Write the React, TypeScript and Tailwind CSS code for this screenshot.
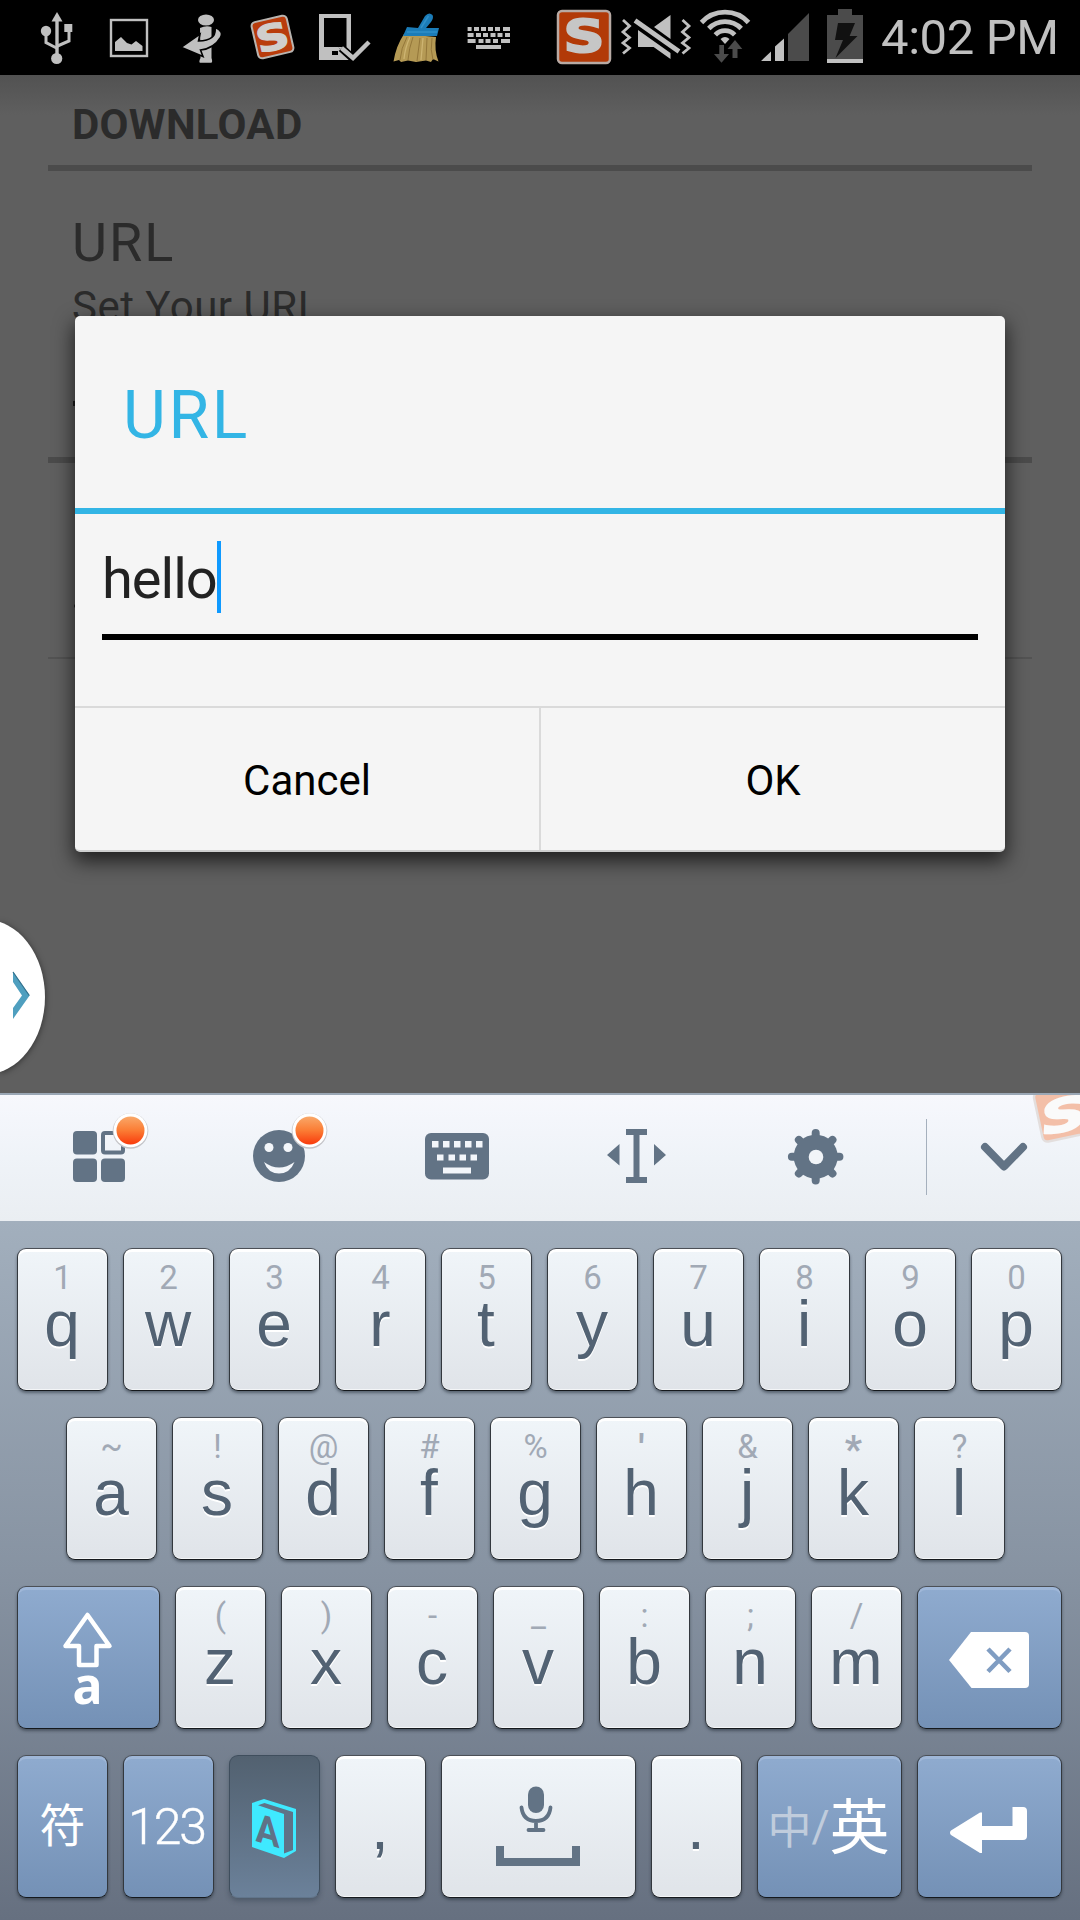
import React from "react";

type Box = { box: string; className: string; children: React.ReactNode };

const Art = ({ box, className, children }: Box) => (
  <svg viewBox={box} className={"block shrink-0 " + className} fill="none">
    {children}
  </svg>
);

const LIGHT = "#c0c0c0";
const SLATE = "#627385";

const keyRows: [number, [number, number][]][] = [
  [27, [[467.6, 4], [474, 5], [481, 5], [488, 5], [495, 5], [503, 7]]],
  [33, [[467.6, 6], [476, 5], [483, 5], [490.5, 5], [497.5, 5], [505, 5]]],
  [39, [[467.6, 8], [478.5, 5], [485.5, 5], [493, 5], [501, 9]]],
];

function StatusBar() {
  return (
    <header className="flex h-[75px] w-full shrink-0 bg-black">
      <Art box="40 0 33 75" className="ml-10 h-[75px] w-[33px]">
        <path d="M57 18V58" stroke={LIGHT} strokeWidth="3.4" />
        <path d="M57 12L62.5 21.5H51.5Z" fill={LIGHT} />
        <circle cx="46" cy="31" r="5.2" fill={LIGHT} />
        <rect x="64.3" y="24" width="8" height="8" fill={LIGHT} />
        <circle cx="56.7" cy="58.5" r="5.6" fill={LIGHT} />
        <path d="M46 33V42.5L56.5 48M69 31V41L57.5 46" stroke={LIGHT} strokeWidth="3" />
      </Art>
      <Art box="109 0 40 75" className="ml-9 h-[75px] w-10">
        <rect x="111" y="20" width="36" height="36" stroke={LIGHT} strokeWidth="2.4" />
        <path d="M115 51V42L121 37L127 43L131.5 44.5L136 41L142.5 46V51Z" fill={LIGHT} />
      </Art>
      <Art box="180 0 43 75" className="ml-[31px] h-[75px] w-[43px]">
        <ellipse cx="206" cy="20" rx="8" ry="5.6" fill={LIGHT} />
        <path d="M200 28Q206 25 211.500 27V58Q213 62.500 211 62.800H200Q198.500 62 200.500 58Z" fill={LIGHT} />
        <path d="M181 47.300L200 34L198.500 41Q217 40.500 215 27.500Q224 31 220.500 37.500Q214 48.500 200.500 50L203 56.500Z" fill={LIGHT} stroke="#000" strokeWidth="1.6" />
      </Art>
      <Art box="248 0 49 75" className="ml-[25px] h-[75px] w-[49px]">
        <g transform="rotate(-13 272.500 37)">
          <rect x="254.500" y="18.500" width="36" height="37" rx="4" fill="#b93c0c" stroke="#b8b4b0" strokeWidth="2" />
          <text x="272.500" y="50" fontSize="36" fontWeight="700" fontFamily="DejaVu Sans" textAnchor="middle" fill="#d0cecc" stroke="#d0cecc" strokeWidth="1.300" textLength="33" lengthAdjust="spacingAndGlyphs">S</text>
        </g>
      </Art>
      <Art box="317 0 56 75" className="ml-5 h-[75px] w-14">
        <path fillRule="evenodd" d="M319 14H351V60H319ZM324 18V47H346.500V18Z" fill={LIGHT} />
        <rect x="332" y="51" width="6" height="4" fill="#000" />
        <path d="M338 47L353 60.500L370 42V62H352Z" fill="#000" />
        <path d="M341.500 48L353 58.500L369 42" stroke="#000" strokeWidth="8" />
        <path d="M341.500 48L353 58L369 42" stroke={LIGHT} strokeWidth="4.500" />
      </Art>
      <Art box="391 0 50 75" className="ml-[18px] h-[75px] w-[50px]">
        <path d="M404 34Q396 46 393.500 61.500L399 60L401 62L408 60.500L416 62L426 60.500L431 62L433 59L438.500 61.500Q434 50 436 37Z" fill="#b59a55" />
        <path d="M407 37Q401 48 400 60M413 37Q409 48 408 60M420 38L417 61M427 38L426 60M432 38Q430 50 433 60" stroke="#94773a" strokeWidth="1" />
        <path d="M410 37Q405 48 404 59M423 38L421 60" stroke="#cdb472" strokeWidth="1.300" />
        <path d="M407 27L418 28L425 16Q429 11.500 432.500 15Q434 18 431 22L426 28L439 28L437 36H403Z" fill="#1b7cb8" />
        <path d="M407 32H437M421 28L428.500 16" stroke="#2f8fc8" strokeWidth="1.600" />
      </Art>
      <Art box="466 0 46 75" className="ml-[25px] h-[75px] w-[46px]">
        {keyRows.map(([y, xs]) =>
          xs.map(([x, w]) => <rect key={x + "-" + y} x={x} y={y} width={w} height="4" fill={LIGHT} />)
        )}
        <rect x="476" y="45" width="25" height="4" fill={LIGHT} />
      </Art>
      <Art box="556 0 56 75" className="ml-11 h-[75px] w-14">
        <rect x="558" y="11" width="52" height="52" rx="4" fill="#b23a08" stroke="#b8aaa4" strokeWidth="2.500" />
        <text x="584" y="52" fontSize="44" fontWeight="700" fontFamily="DejaVu Sans" textAnchor="middle" fill="#c6c6c6" stroke="#c6c6c6" strokeWidth="2" textLength="41" lengthAdjust="spacingAndGlyphs">S</text>
      </Art>
      <Art box="620 0 72 75" className="ml-2 h-[75px] w-[72px]">
        <path d="M623 20L629.500 26L623 32L629.500 37.500L623 43L629.500 48L623 53.500M682.500 20L689 26L682.500 32L689 37.500L682.500 43L689 48L682.500 53.500" stroke={LIGHT} strokeWidth="2.800" />
        <path d="M638 30V47H653.600L670.500 59V53ZM654 27L670.500 15V39Z" fill={LIGHT} />
        <path d="M635 20.500L679 51.500" stroke={LIGHT} strokeWidth="4.800" />
      </Art>
      <Art box="699 0 52 75" className="ml-[7px] h-[75px] w-[52px]">
        <path d="M701.500 22.500A32 32 0 0 1 748.500 22.500M708.800 28.500A22.500 22.500 0 0 1 741.200 28.500M715.300 34.800A13.500 13.500 0 0 1 734.700 34.800" stroke={LIGHT} strokeWidth="4.800" />
        <path d="M725 44L720.500 39Q725 35 729.500 39Z" fill={LIGHT} />
        <path d="M719.300 45H724V54H729L721.500 62.800L714 54H719.300ZM735 40L742.300 49H737.500V58H732.500V49H727.500Z" fill="#4b4b4b" />
      </Art>
      <Art box="760 0 50 75" className="ml-[9px] h-[75px] w-[50px]">
        <path d="M761 61H771V51.500ZM775 61H784V38.500L775 46.500Z" fill={LIGHT} />
        <path d="M788 61H809V13L788 34Z" fill="#4b4b4b" />
      </Art>
      <Art box="826 0 38 75" className="ml-4 h-[75px] w-[38px]">
        <path d="M827 15H838V9H852V15H863V59H827Z" fill="#4b4b4b" />
        <rect x="827" y="59" width="36" height="4" fill={LIGHT} />
        <path d="M838 23H855L849.600 36H857.500L835.500 58L843 40H835Z" fill="#111" />
      </Art>
      <span className="ml-[17px] whitespace-nowrap font-['Roboto',sans-serif] text-[49px] leading-[75px] tracking-[-0.4px] text-[#c0c0c0]">4:02 PM</span>
    </header>
  );
}

function Settings() {
  return (
    <main className="relative flex h-[1018px] shrink-0 flex-col bg-[#5f5f5f] px-12 font-['Roboto',sans-serif] text-[#2b2b2b]">
      <div className="absolute inset-x-0 top-0 h-10 bg-linear-to-b from-[#525252] to-[#5f5f5f]" />
      <h2 className="relative h-[90px] pl-6 pt-[9px] text-[42px] font-bold leading-[81px] tracking-[0.3px]">DOWNLOAD</h2>
      <div className="h-1.5 bg-[#4b4b4b]" />
      <div className="h-[196px] pl-6 pt-10">
        <p className="text-[54px] leading-[64px] tracking-[2px]">URL</p>
        <p className="mt-[7px] text-[42px] leading-[50px] tracking-[0.5px]">Set Your URL</p>
      </div>
      <div className="h-[90px] pl-[25px] pt-[34px]">
        <div className="h-[5px] w-2 bg-[#1c1c1c]" />
      </div>
      <div className="h-1.5 bg-[#4b4b4b]" />
      <div className="h-[194px] pl-[26px] pt-[141px]">
        <div className="h-1 w-2 rounded-l-sm bg-[#1c1c1c]" />
      </div>
      <div className="h-0.5 bg-[#535353]" />

      <section className="absolute left-[75px] top-[241px] flex h-[536px] w-[930px] flex-col rounded-[5px] border-b-2 border-[#cfd0d0] bg-[#f5f5f5] shadow-[0_8px_20px_1px_rgba(0,0,0,0.68)]">
        <h1 className="h-[192px] pl-12 pt-[60px] text-[66px] leading-[80px] tracking-[2.700px] text-[#33b5e5]">URL</h1>
        <div className="h-1.5 bg-[#33b5e5]" />
        <div className="flex h-[192px] flex-col px-[27px] pt-[27px]">
          <div className="flex h-[93px] items-start">
            <span className="w-[115px] whitespace-nowrap text-[56px] leading-[76px] tracking-[-1px] text-[#222]">hello</span>
            <div className="h-[72px] w-1 bg-[#0f9aff]" />
          </div>
          <div className="h-1.5 bg-black" />
        </div>
        <div className="h-0.5 shrink-0 bg-[#dadada]" />
        <div className="flex grow text-[42px] text-black">
          <button className="flex-1 pt-[3px]">Cancel</button>
          <div className="w-0.5 bg-[#dadada]" />
          <button className="flex-1 pt-[3px]">OK</button>
        </div>
      </section>

      <Art box="0 910 56 170" className="absolute left-0 top-[835px] h-[170px] w-14 drop-shadow-[0_1px_3px_rgba(0,0,0,0.5)]">
        <ellipse cx="-15" cy="997" rx="60" ry="77.500" fill="#fff" />
        <path d="M13 971.500L29.600 995.500L13 1019V1008L22 995.500L13 982Z" fill="#4f9fbf" />
        <path d="M13 972L29.300 995.500" stroke="#33718c" strokeWidth="1.200" />
      </Art>
    </main>
  );
}

const Badge = ({ cx }: { cx: number }) => (
  <>
    <circle cx={cx} cy="1131" r="17.800" fill="#c4c4c8" />
    <circle cx={cx} cy="1130.300" r="17" fill="#fff" />
    <circle cx={cx} cy="1130.500" r="14" fill="url(#ember)" />
  </>
);

function Toolbar() {
  return (
    <div className="relative flex h-[128px] overflow-hidden border-t-2 border-[#9aa7b5] bg-linear-to-b from-[#f7f8fd] via-[#eff3f8] to-[#eaeef2]">
      <Art box="70 1095 80 126" className="ml-[70px] h-[126px] w-20">
        <defs>
          <linearGradient id="ember" x1="0" y1="0" x2="0" y2="1">
            <stop offset="0" stopColor="#f9a869" />
            <stop offset="0.500" stopColor="#fb7c34" />
            <stop offset="1" stopColor="#f93a0c" />
          </linearGradient>
        </defs>
        <rect x="73" y="1131" width="24" height="23.500" rx="4" fill={SLATE} />
        <rect x="103" y="1133" width="20" height="19.500" rx="2" stroke={SLATE} strokeWidth="4" />
        <rect x="73" y="1158.500" width="24" height="23.500" rx="4" fill={SLATE} />
        <rect x="101" y="1158.500" width="24" height="23.500" rx="4" fill={SLATE} />
        <Badge cx={130.500} />
      </Art>
      <Art box="250 1095 80 126" className="ml-[100px] h-[126px] w-20">
        <circle cx="279" cy="1156" r="26" fill={SLATE} />
        <circle cx="269" cy="1147.500" r="4.500" fill="#f3f6fa" />
        <circle cx="288" cy="1147.500" r="4.500" fill="#f3f6fa" />
        <path d="M264 1162Q279 1173 294.500 1162Q290 1173.500 279 1173.500Q268 1173.500 264 1162Z" fill="#f3f6fa" />
        <Badge cx={309.500} />
      </Art>
      <Art box="420 1095 75 126" className="ml-[90px] h-[126px] w-[75px]">
        <rect x="425" y="1133" width="64" height="46.500" rx="6" fill={SLATE} />
        {[432, 443, 454, 465, 476].map((x) => (
          <rect key={x} x={x} y="1141" width="6.500" height="6.500" fill="#f3f6fa" />
        ))}
        {[437, 448.500, 459.500, 470.500].map((x) => (
          <rect key={x} x={x} y="1154.500" width="6.500" height="6" fill="#f3f6fa" />
        ))}
        <rect x="443" y="1167.500" width="28" height="6" fill="#f3f6fa" />
      </Art>
      <Art box="600 1095 75 126" className="ml-[105px] h-[126px] w-[75px]">
        <path d="M626 1129H647V1135H639.500V1177H647V1183H626V1177H633.500V1135H626Z" fill={SLATE} />
        <path d="M619.500 1144V1165.500L607 1155ZM654 1144V1165.500L666 1155Z" fill={SLATE} />
      </Art>
      <Art box="780 1095 75 126" className="ml-[105px] h-[126px] w-[75px]">
        {[0, 45, 90, 135].map((a) => (
          <path key={a} d="M815.700 1133V1180.500" stroke={SLATE} strokeWidth="8" strokeLinecap="round" transform={`rotate(${a} 815.700 1156.700)`} />
        ))}
        <circle cx="815.700" cy="1156.700" r="22" fill={SLATE} />
        <circle cx="816" cy="1157" r="7.300" fill="#f1f4f8" />
      </Art>
      <div className="ml-[71px] mt-6 h-[76px] w-px bg-[#a5b0bd]" />
      <Art box="975 1095 60 126" className="ml-12 h-[126px] w-[60px]">
        <path d="M985 1147L1004 1166.500L1023 1147" stroke={SLATE} strokeWidth="8" strokeLinecap="round" strokeLinejoin="round" />
      </Art>
      <Art box="1030 1093 50 56" className="absolute right-0 -top-0.5 h-14 w-[50px]">
        <g transform="rotate(-12 1062 1114)">
          <rect x="1038" y="1088" width="56" height="50" rx="5" fill="#f3bfa8" stroke="#e3dedd" strokeWidth="2.500" />
          <text x="1063.500" y="1131" fontSize="44" fontWeight="700" fontStyle="italic" fontFamily="DejaVu Sans" textAnchor="middle" fill="#fafafa" stroke="#fafafa" strokeWidth="2" textLength="46" lengthAdjust="spacingAndGlyphs">S</text>
        </g>
      </Art>
    </div>
  );
}

const keyBase =
  "flex h-[143px] shrink-0 flex-col items-center rounded-[9px] border border-t-[#4c5057] border-x-[#33383e] border-b-[#15191d]";
const lightKey =
  keyBase +
  " bg-linear-to-b from-[#f0f5f9] to-[#e0e4e9] shadow-[inset_0_3px_0_#fff,inset_0_-1px_0_#f3f5f7,0_2px_3px_rgba(30,40,50,0.5)]";
const blueKey =
  keyBase +
  " justify-center bg-linear-to-b from-[#8fabcf] to-[#7491b6] shadow-[inset_0_3px_0_#9fb7d8,0_2px_3px_rgba(30,40,50,0.5)]";
const glyph =
  "mr-px font-['Liberation_Sans',sans-serif] text-[64px] leading-[52px] text-[#526273] [text-shadow:0_2px_0_#fff]";

const subBase = "h-10 font-['Roboto',sans-serif] text-[#a1a9b5] ";

const subStyle = (sub: string) => {
  if (sub === "*") return subBase + "text-[38px] font-bold leading-[46px]";
  if (sub === "'") return subBase + "text-[36px] font-bold leading-[44px]";
  return subBase + "text-[33px] leading-10";
};

const Key = ({ main, sub }: { main: string; sub: string }) => (
  <div className={lightKey + " w-[91px] pt-[9px]"}>
    <span className={subStyle(sub)}>{sub}</span>
    <span className={glyph}>{main}</span>
  </div>
);

const Punct = ({ main }: { main: string }) => (
  <div className={lightKey + " w-[91px] pt-[45px]"}>
    <span className={glyph}>{main}</span>
  </div>
);

const rows: [string, string][][] = [
  [["q", "1"], ["w", "2"], ["e", "3"], ["r", "4"], ["t", "5"], ["y", "6"], ["u", "7"], ["i", "8"], ["o", "9"], ["p", "0"]],
  [["a", "~"], ["s", "!"], ["d", "@"], ["f", "#"], ["g", "%"], ["h", "'"], ["j", "&"], ["k", "*"], ["l", "?"]],
  [["z", "("], ["x", ")"], ["c", "-"], ["v", "_"], ["b", ":"], ["n", ";"], ["m", "/"]],
];

function Keyboard() {
  return (
    <footer className="flex h-[827px] shrink-0 flex-col">
      <Toolbar />
      <div className="flex grow flex-col gap-[26px] bg-linear-to-b from-[#a2afbd] via-[#8793a2] via-50% to-[#667080] pl-[17px] pt-[27px]">
        <div className="flex gap-[15px]">
          {rows[0].map(([m, s]) => <Key key={m} main={m} sub={s} />)}
        </div>
        <div className="ml-[49px] flex gap-[15px]">
          {rows[1].map(([m, s]) => <Key key={m} main={m} sub={s} />)}
        </div>
        <div className="flex gap-[15px]">
          <div className={blueKey + " w-[143px]"}>
            <Art box="60 1610 55 62" className="mr-0.5 mt-[11px] h-[62px] w-[55px]">
              <path d="M87.500 1618L109.500 1649H96.500V1668H79V1649H65.500Z" stroke="#fff" strokeWidth="4.500" strokeLinejoin="round" />
            </Art>
            <span className="mr-0.5 h-[50px] font-['Noto_Sans',sans-serif] text-[50px] font-bold leading-[32px] text-white">a</span>
          </div>
          {rows[2].map(([m, s]) => <Key key={m} main={m} sub={s} />)}
          <div className={blueKey + " w-[145px]"}>
            <Art box="949 1632 80 56" className="mr-0.5 mt-1 h-14 w-20">
              <path d="M971 1632H1025Q1029 1632 1029 1636V1684Q1029 1688 1025 1688H971.500L949 1660Z" fill="#fff" />
              <path d="M988 1649L1010 1671.500M1010 1649L988 1671.500" stroke="#809dc2" strokeWidth="4.600" />
            </Art>
          </div>
        </div>
        <div className="flex gap-[15px]">
          <div className={blueKey + " w-[91px] pb-2.5 font-['Noto_Sans_CJK_SC',sans-serif] text-[46px] leading-none text-white"}>符</div>
          <div className={blueKey + " w-[91px] pr-1 font-['Roboto',sans-serif] text-[50px] font-light leading-none tracking-[-2px] text-white [-webkit-text-stroke:0.4px_#fff]"}>123</div>
          <div className="flex h-[143px] w-[91px] shrink-0 items-center justify-center rounded-[9px] border border-[#3f4e5d] border-b-[#61758b] bg-linear-to-b from-[#526170] to-[#6b819a] shadow-[0_3px_5px_rgba(40,55,70,0.4)]">
            <Art box="251 1798 46 61" className="mr-0.5 mt-1 h-[61px] w-[46px]">
              <path d="M252 1803L264 1799L296 1809V1851L284 1858L252 1847Z" fill="#3fe9ff" />
              <path d="M258 1805.300L264.500 1803L293 1812V1850L284 1853.500V1814Z" fill="#5f7388" />
              <text transform="matrix(1 0.300 0 1 255.500 1841)" x="0" y="0" fontSize="40" fontWeight="700" fontFamily="Roboto" fill="#5f7388" textLength="24" lengthAdjust="spacingAndGlyphs">A</text>
            </Art>
          </div>
          <Punct main="," />
          <div className={lightKey + " w-[195px] pt-[30px]"}>
            <Art box="495 1786 86 82" className="mr-[1px] h-[82px] w-[86px]">
              <rect x="528" y="1786.500" width="16" height="26.500" rx="8" fill={SLATE} />
              <path d="M521.500 1807.500Q523 1821 536 1821Q549 1821 550.500 1807.500M536 1821V1830M528.500 1830H543.500" stroke={SLATE} strokeWidth="3.800" strokeLinecap="round" />
              <path d="M496 1846H504V1858H572V1846H580V1866H496Z" fill={SLATE} />
            </Art>
          </div>
          <Punct main="." />
          <div className={blueKey + " w-[145px]"}>
            <div className="mb-2 mr-0.5 flex items-center font-['Noto_Sans_CJK_SC',sans-serif] leading-none text-white">
              <span className="mt-1 text-[44px] text-[#c0ccdc]">中</span>
              <span className="mt-2 font-['Roboto',sans-serif] text-[44px] text-[#c0ccdc]">/</span>
              <span className="text-[60px]">英</span>
            </div>
          </div>
          <div className={blueKey + " w-[145px]"}>
            <Art box="949 1806 79 48" className="mr-0.5 mt-[7px] h-12 w-[79px]">
              <path d="M1012.500 1807H1023Q1027 1807 1027 1811V1836Q1027 1840 1023 1840H982V1853L980 1853L951 1835Q949 1832.500 951 1830.500L980 1812.500L982 1812.500V1826H1012.500Z" fill="#fff" />
            </Art>
          </div>
        </div>
      </div>
    </footer>
  );
}

export default function App() {
  return (
    <div className="flex h-[1920px] w-[1080px] flex-col overflow-hidden">
      <StatusBar />
      <Settings />
      <Keyboard />
    </div>
  );
}
